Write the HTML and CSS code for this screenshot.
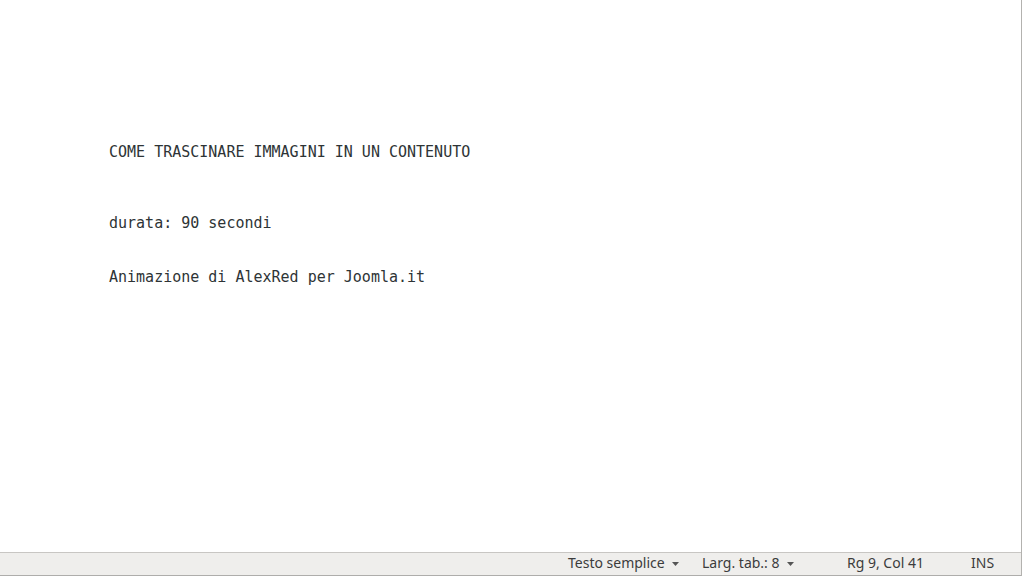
FILE: index.html
```html
<!DOCTYPE html>
<html lang="it">
<head>
<meta charset="UTF-8">
<meta name="viewport" content="width=device-width, initial-scale=1.0">
<title>Testo semplice</title>
<link rel="stylesheet" href="styles.css">
</head>
<body>

<div class="window">
    <!-- area del testo -->
    <div class="editor">
        <p class="line title">COME TRASCINARE IMMAGINI IN UN CONTENUTO</p>
        <p class="line duration">durata: 90 secondi</p>
        <p class="line credits">Animazione di AlexRed per Joomla.it</p>
    </div>

    <!-- barra di stato -->
    <div class="statusbar">
        <div class="status-item lang">Testo semplice
            <svg class="arrow" width="7" height="4" viewBox="0 0 7 4"><path d="M0 0h7L3.5 4z" fill="#555"/></svg>
        </div>
        <div class="status-item tabs">Larg. tab.: 8
            <svg class="arrow" width="7" height="4" viewBox="0 0 7 4"><path d="M0 0h7L3.5 4z" fill="#555"/></svg>
        </div>
        <div class="status-item pos">Rg 9, Col 41</div>
        <div class="status-item mode">INS</div>
    </div>
</div>

</body>
</html>
```

FILE: styles.css
```css
html, body {
    margin: 0;
    padding: 0;
    background-color: #fff;
    overflow: hidden;
}
.window {
    width: 1021px;
    height: 576px;
    display: flex;
    flex-direction: column;
    border-right: 1px solid #b3b2af;
}
.editor {
    flex: 1;
    padding: 143px 0 0 109px;
    background-color: #fff;
}
.line {
    margin: 0;
    font-family: "DejaVu Sans Mono", "Liberation Mono", monospace;
    font-size: 15px;
    line-height: 18px;
    color: #2e3436;
    white-space: pre;
}
.duration {
    margin-top: 53px;
}
.credits {
    margin-top: 36px;
}
.statusbar {
    height: 22px;
    box-sizing: content-box;
    padding-bottom: 0;
    display: flex;
    align-items: center;
    justify-content: flex-end;
    background-color: #efeeec;
    border-top: 1px solid #c8c6c3;
    border-bottom: 1px solid #aeadab;
    font-family: "Noto Sans", "Open Sans", sans-serif;
    font-size: 14px;
    line-height: 20px;
    color: #3c3c3c;
}
.status-item {
    display: flex;
    align-items: center;
    gap: 7px;
    white-space: nowrap;
    margin-bottom: 2px;
}
.arrow {
    margin-top: 2px;
}
.lang {
    width: 134px;
}
.tabs {
    width: 145px;
}
.pos {
    width: 124px;
}
.mode {
    width: 50px;
}
```
